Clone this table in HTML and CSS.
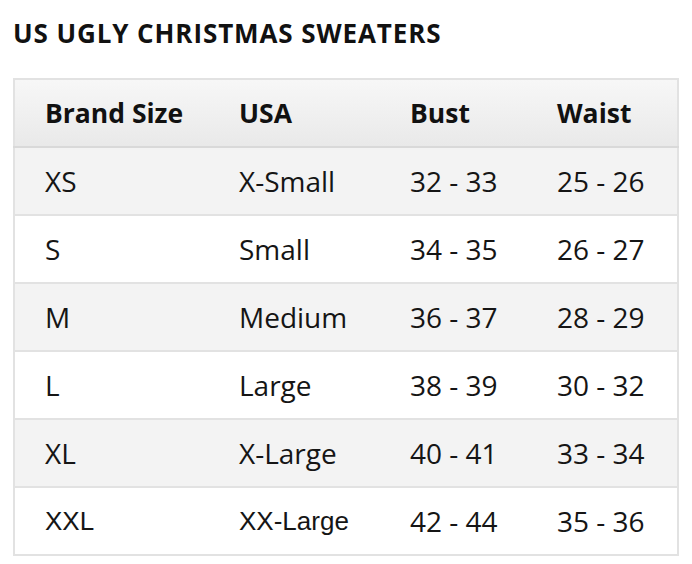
FILE: index.html
```html
<!DOCTYPE html>
<html>
<head>
<meta charset="utf-8">
<link rel="stylesheet" href="styles.css">
</head>
<body>
<h1 class="title">US UGLY CHRISTMAS SWEATERS</h1>
<table class="chart">
<thead>
<tr><th class="c1">Brand Size</th><th class="c2">USA</th><th class="c3">Bust</th><th class="c4">Waist</th></tr>
</thead>
<tbody>
<tr class="odd"><td>XS</td><td>X-Small</td><td>32 - 33</td><td>25 - 26</td></tr>
<tr><td>S</td><td>Small</td><td>34 - 35</td><td>26 - 27</td></tr>
<tr class="odd"><td>M</td><td>Medium</td><td>36 - 37</td><td>28 - 29</td></tr>
<tr><td>L</td><td>Large</td><td>38 - 39</td><td>30 - 32</td></tr>
<tr class="odd"><td>XL</td><td>X-Large</td><td>40 - 41</td><td>33 - 34</td></tr>
<tr><td class="arial">XXL</td><td class="arial">XX-Large</td><td>42 - 44</td><td>35 - 36</td></tr>
</tbody>
</table>
</body>
</html>
```
FILE: styles.css
```css
html, body {
  margin: 0;
  padding: 0;
  background: #ffffff;
}
body {
  padding: 0 15px 0 13px;
  font-family: "Open Sans", "Noto Sans", sans-serif;
  color: #111111;
}
.title {
  margin: 0;
  padding-top: 17px;
  height: 78px;
  box-sizing: border-box;
  font-size: 26px;
  line-height: 32px;
  letter-spacing: 0.9px;
  font-weight: 700;
  color: #111111;
}
.chart {
  width: 664px;
  border-collapse: collapse;
  border: 2px solid #e2e2e2;
  table-layout: fixed;
}
.chart th, .chart td {
  height: 68px;
  padding: 0 0 0 30px;
  text-align: left;
  font-size: 28px;
  border-bottom: 2px solid #e2e2e2;
  box-sizing: border-box;
}
.chart th {
  font-size: 26.5px;
  font-weight: 700;
  background: linear-gradient(#f7f7f7, #e9e9e9);
  border-bottom: 2px solid #d9d9d9;
}
.chart td {
  font-weight: 400;
  color: #151515;
}
.chart .c1 { width: 195px; }
.chart .c2 { width: 171px; }
.chart .c3 { width: 147px; }
.chart .c4 { width: 151px; }
.chart tr.odd td { background: #f3f3f3; }
.chart td.arial {
  font-size: 26px;
  font-family: "Liberation Sans", Arial, sans-serif;
}
```
